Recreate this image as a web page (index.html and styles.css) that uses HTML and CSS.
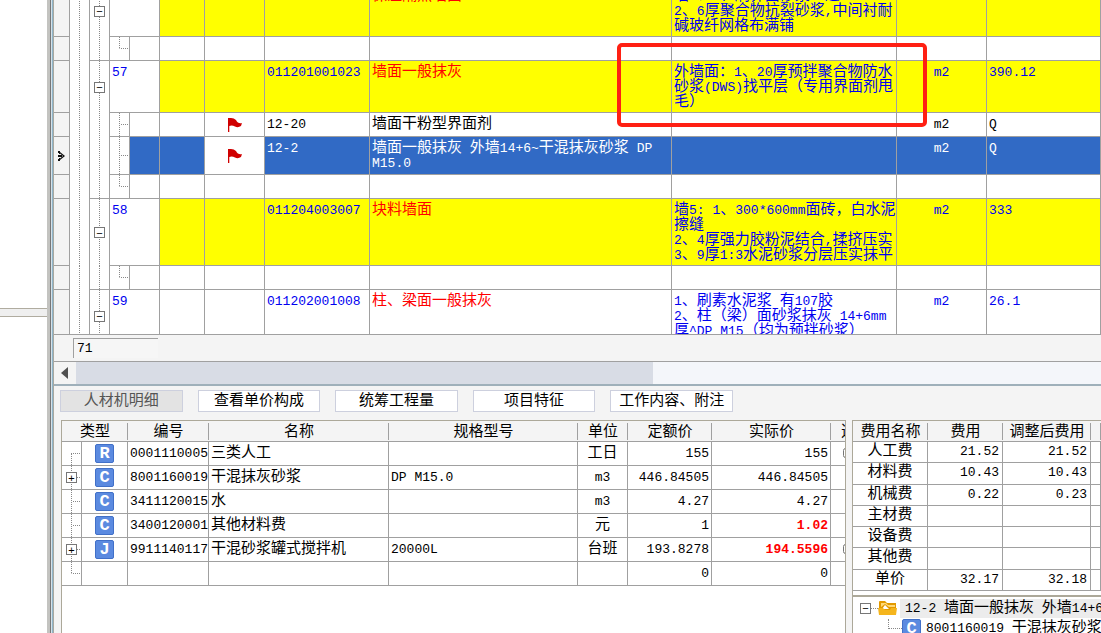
FILE: index.html
```
<!DOCTYPE html>
<html lang="zh-CN">
<head>
<meta charset="utf-8">
<title>工程计价</title>
<link rel="stylesheet" href="styles.css">
</head>
<body>
<div class="app">
  <aside class="side">
    <div class="side-pane side-top"></div>
    <div class="side-pane side-bottom"></div>
  </aside>
  <div class="splitter"></div>
  <main class="main">
    <section class="upper">
      <div class="viewport">
        <table class="grid items">
          <colgroup>
            <col class="w16"><col class="w20"><col class="w20"><col class="w20"><col class="w30"><col class="w45"><col class="w60"><col class="w105"><col class="w302"><col class="w225"><col class="w90"><col>
          </colgroup>
          <tbody>
            <tr class="hl">
              <td class="ind"></td><td class="trunk"></td><td class="node"><button class="box" aria-label="折叠">−</button></td>
              <td class="idx" colspan="2"></td><td></td><td></td><td></td><td class="red">保温隔热墙面</td>
              <td>墙<i>6</i>：<i>1</i>、刷界面砂浆一道<br><i>2</i>、<i>6</i>厚聚合物抗裂砂浆<i>,</i>中间衬耐<br>碱玻纤网格布满铺</td><td></td><td></td>
            </tr>
            <tr class="child">
              <td class="ind"></td><td class="trunk"></td><td class="through last"></td><td class="leaf end"></td><td></td><td></td><td></td><td></td><td></td><td></td><td></td><td></td>
            </tr>
            <tr class="hl">
              <td class="ind"></td><td class="trunk"></td><td class="node"><button class="box" aria-label="折叠">−</button></td>
              <td class="idx" colspan="2"><i>57</i></td><td></td><td></td><td><i>011201001023</i></td><td class="red">墙面一般抹灰</td>
              <td>外墙面：<i>1</i>、<i>20</i>厚预拌聚合物防水<br>砂浆<i>(DWS)</i>找平层（专用界面剂甩<br>毛）</td><td class="c"><i>m2</i></td><td><i>390.12</i></td>
            </tr>
            <tr class="child">
              <td class="ind"></td><td class="trunk"></td><td class="through"></td><td class="leaf"></td><td></td><td></td>
              <td class="flag"><svg width="16" height="16" viewBox="0 0 16 16"><path d="M1 1H4Q7 1 9 3Q11 7 15 6L14 9Q11 11 8 9.500Q5 8 2.300 9V15H1Z" fill="#d00000"/></svg></td>
              <td><i>12-20</i></td><td>墙面干粉型界面剂</td><td></td><td class="c"><i>m2</i></td><td><i>Q</i></td>
            </tr>
            <tr class="child tall sel">
              <td class="ind"><svg width="8" height="12" viewBox="0 0 8 12"><path d="M0 1H2V3H0ZM0 9H2V11H0ZM0 5H4V7H0ZM1 3H2V4H1ZM1 8H2V9H1ZM2 2L7 6L2 10V8.500L5 6L2 3.500Z" fill="#111"/></svg></td><td class="trunk"></td><td class="through"></td><td class="leaf"></td><td></td><td></td>
              <td class="flag"><svg width="16" height="16" viewBox="0 0 16 16"><path d="M1 1H4Q7 1 9 3Q11 7 15 6L14 9Q11 11 8 9.500Q5 8 2.300 9V15H1Z" fill="#d00000"/></svg></td>
              <td><i>12-2</i></td><td>墙面一般抹灰<i> </i>外墙<i>14+6~</i>干混抹灰砂浆<i> DP</i><br><i>M15.0</i></td><td></td><td class="c"><i>m2</i></td><td><i>Q</i></td>
            </tr>
            <tr class="child">
              <td class="ind"></td><td class="trunk"></td><td class="through last"></td><td class="leaf end"></td><td></td><td></td><td></td><td></td><td></td><td></td><td></td><td></td>
            </tr>
            <tr class="hl four">
              <td class="ind"></td><td class="trunk"></td><td class="node"><button class="box" aria-label="折叠">−</button></td>
              <td class="idx" colspan="2"><i>58</i></td><td></td><td></td><td><i>011204003007</i></td><td class="red">块料墙面</td>
              <td>墙<i>5: 1</i>、<i>300*600mm</i>面砖，白水泥<br>擦缝<br><i>2</i>、<i>4</i>厚强力胶粉泥结合<i>,</i>揉挤压实<br><i>3</i>、<i>9</i>厚<i>1:3</i>水泥砂浆分层压实抹平</td><td class="c"><i>m2</i></td><td><i>333</i></td>
            </tr>
            <tr class="child">
              <td class="ind"></td><td class="trunk"></td><td class="through last"></td><td class="leaf end"></td><td></td><td></td><td></td><td></td><td></td><td></td><td></td><td></td>
            </tr>
            <tr class="plain">
              <td class="ind"></td><td class="trunk"></td><td class="node"><button class="box" aria-label="折叠">−</button></td>
              <td class="idx" colspan="2"><i>59</i></td><td></td><td></td><td><i>011202001008</i></td><td class="red">柱、梁面一般抹灰</td>
              <td><i>1</i>、刷素水泥浆<i> </i>有<i>107</i>胶<br><i>2</i>、柱（梁）面砂浆抹灰<i> 14+6mm</i><br>厚<i>^DP M15</i>（均为预拌砂浆）</td><td class="c"><i>m2</i></td><td><i>26.1</i></td>
            </tr>
          </tbody>
        </table>
        <div class="mark"></div>
      </div>
      <div class="summary"><span class="count"><i>71</i></span></div>
      <div class="hscroll"><button class="arrow" aria-label="向左滚动"><svg width="8" height="12" viewBox="0 0 8 12"><path d="M7 0V12L0 6Z" fill="#505050"/></svg></button><div class="thumb"></div><div class="rest"></div></div>
    </section>
    <section class="lower">
      <nav class="tabs">
        <button class="tab on">人材机明细</button><button class="tab">查看单价构成</button><button class="tab">统筹工程量</button><button class="tab">项目特征</button><button class="tab">工作内容、附注</button>
      </nav>
      <div class="panels">
        <div class="panel detail">
          <table class="grid res">
            <colgroup><col class="w20"><col class="w46"><col class="w81"><col class="w180"><col class="w189"><col class="w50"><col class="w84"><col class="w119"><col class="w35"></colgroup>
            <thead><tr><th colspan="2">类型</th><th>编号</th><th>名称</th><th>规格型号</th><th>单位</th><th>定额价</th><th>实际价</th><th>选</th></tr></thead>
            <tbody>
              <tr><td class="leaf start"></td><td class="kind"><b>R</b></td><td><i>0001110005</i></td><td>三类人工</td><td></td><td class="c">工日</td><td class="r"><i>155</i></td><td class="r"><i>155</i></td><td class="c"><input type="checkbox" aria-label="选"></td></tr>
              <tr><td class="leaf"><button class="box" aria-label="展开">+</button></td><td class="kind"><b>C</b></td><td><i>8001160019</i></td><td>干混抹灰砂浆</td><td><i>DP M15.0</i></td><td class="c"><i>m3</i></td><td class="r"><i>446.84505</i></td><td class="r"><i>446.84505</i></td><td></td></tr>
              <tr><td class="leaf"></td><td class="kind"><b>C</b></td><td><i>3411120015</i></td><td>水</td><td></td><td class="c"><i>m3</i></td><td class="r"><i>4.27</i></td><td class="r"><i>4.27</i></td><td></td></tr>
              <tr><td class="leaf"></td><td class="kind"><b>C</b></td><td><i>3400120001</i></td><td>其他材料费</td><td></td><td class="c">元</td><td class="r"><i>1</i></td><td class="r changed"><i>1.02</i></td><td></td></tr>
              <tr><td class="leaf"><button class="box" aria-label="展开">+</button></td><td class="kind"><b>J</b></td><td><i>9911140117</i></td><td>干混砂浆罐式搅拌机</td><td><i>20000L</i></td><td class="c">台班</td><td class="r"><i>193.8278</i></td><td class="r changed"><i>194.5596</i></td><td class="c"><input type="checkbox" aria-label="选"></td></tr>
              <tr><td class="leaf end"></td><td></td><td></td><td></td><td></td><td></td><td class="r"><i>0</i></td><td class="r"><i>0</i></td><td></td></tr>
            </tbody>
          </table>
        </div>
        <div class="cost-col">
          <div class="panel cost">
            <table class="grid fees">
              <colgroup><col class="w75"><col class="w75"><col class="w88"><col></colgroup>
              <thead><tr><th>费用名称</th><th>费用</th><th>调整后费用</th><th></th></tr></thead>
              <tbody>
                <tr><td class="c">人工费</td><td class="r"><i>21.52</i></td><td class="r"><i>21.52</i></td><td></td></tr>
                <tr><td class="c">材料费</td><td class="r"><i>10.43</i></td><td class="r"><i>10.43</i></td><td></td></tr>
                <tr><td class="c">机械费</td><td class="r"><i>0.22</i></td><td class="r"><i>0.23</i></td><td></td></tr>
                <tr><td class="c">主材费</td><td></td><td></td><td></td></tr>
                <tr><td class="c">设备费</td><td></td><td></td><td></td></tr>
                <tr><td class="c">其他费</td><td></td><td></td><td></td></tr>
                <tr><td class="c">单价</td><td class="r"><i>32.17</i></td><td class="r"><i>32.18</i></td><td></td></tr>
              </tbody>
            </table>
          </div>
          <div class="tree">
            <div class="branch"><button class="box" aria-label="折叠">−</button><span class="dots"></span><svg width="20" height="16" viewBox="0 0 20 16"><path d="M1 2Q1 1 2 1H7L9 3H18V14Q18 15 17 15H2Q1 15 1 14Z" fill="#e39a00"/><path d="M3 7L7 4L11 7H17V5H10L8 3H3Z" fill="#ffd978"/><path d="M4 9L7 5L11 9Z" fill="#fff"/><path d="M0 8H5L7 10H12L13 8H19L18 15H1Z" fill="#f5b51c"/></svg><span class="label on"><i>12-2 </i>墙面一般抹灰<i> </i>外墙<i>14+6~</i>干混抹灰砂浆</span></div>
            <div class="branch sub"><span class="elbow"></span><b class="badge">C</b><span class="label"><i>8001160019 </i>干混抹灰砂浆</span></div>
          </div>
        </div>
      </div>
    </section>
  </main>
</div>
</body>
</html>
```
FILE: styles.css
```
* { box-sizing: border-box; }
body { margin: 0; color: #000; background: #f4f4f4; font: 15px/15px "Liberation Mono", "Noto Sans CJK SC", sans-serif; }
button { margin: 0; padding: 0; color: inherit; font: inherit; }
i { font-style: normal; font-size: 13px; white-space: pre; }
.app { display: flex; height: 100vh; overflow: hidden; }

.side { flex: 0 0 47px; display: flex; flex-direction: column; gap: 7px; background: #efefef; }
.side-pane { background: #fff; }
.side-top { flex: 309; border-bottom: 1px solid #b0aca0; }
.side-bottom { flex: 317; border-top: 1px solid #b0aca0; }
.splitter { flex: 0 0 7px; background: linear-gradient(90deg, #c3c3c0 0 3px, #777 3px 4px, #d4e2ea 4px 5px, #8fb4c8 5px 6px, #a8a8a0 6px 7px); }

.main { flex: 1; min-width: 0; display: grid; grid-template-rows: minmax(0, 386fr) minmax(0, 247fr); }
.upper { display: flex; flex-direction: column; min-height: 0; border-bottom: 2px solid #9fb0ba; }
.viewport { flex: 1; min-height: 0; position: relative; overflow: hidden; background: #fff; border-bottom: 1px solid #a0a0a0; }

.grid { width: 100%; table-layout: fixed; border-collapse: separate; border-spacing: 0; }
.grid td { padding: 4px 2px 0; border-right: 1px solid #a0a0a0; border-bottom: 1px solid #a0a0a0; vertical-align: top; white-space: nowrap; overflow: hidden; }
.grid .c { text-align: center; }
.grid .r { text-align: right; }
.w16 { width: 16px; } .w20 { width: 20px; } .w30 { width: 30px; } .w35 { width: 35px; } .w45 { width: 45px; }
.w46 { width: 46px; } .w50 { width: 50px; } .w60 { width: 60px; } .w75 { width: 75px; } .w81 { width: 81px; }
.w84 { width: 84px; } .w88 { width: 88px; } .w90 { width: 90px; } .w105 { width: 105px; } .w119 { width: 119px; }
.w180 { width: 180px; } .w189 { width: 189px; } .w225 { width: 225px; } .w302 { width: 302px; }

.items { margin-top: -15px; }
.items tr { height: 52px; }
.items .child { height: 24px; }
.items .tall { height: 38px; }
.items .four { height: 67px; }
.hl, .plain { color: #0000f0; }
.hl td { background: #ff0; }
.items .red { color: #f00; }
.items .ind { padding: 0; background: #f4f4f4; text-align: center; vertical-align: middle; }
.items .idx { background: #fff; }
.sel td { color: #fff; background: #316ac5; }
.items .flag { padding: 0; background: #fff; text-align: center; vertical-align: middle; }
.flag svg, .ind svg { display: block; margin: auto; }
.items .trunk, .items .through, .items .node { padding: 0; border-bottom: 0; background: repeating-linear-gradient(#888 0 1px, #fff 1px 2px) 9px 0 / 1px 100% no-repeat #fff; vertical-align: middle; }
.items .last { border-bottom: 1px solid #a0a0a0; }
.node .box { margin-left: 4px; }
.box { display: block; width: 11px; height: 11px; border: 1px solid #777; background: #fff; font: 11px/8px "Liberation Sans", sans-serif; color: #000; text-align: center; }

.grid .leaf { --v: 100%; --y: 0; padding: 0 0 0 4px; vertical-align: middle;
  background: repeating-linear-gradient(#888 0 1px, #fff 1px 2px) 9px var(--y) / 1px var(--v) no-repeat,
    repeating-linear-gradient(90deg, #888 0 1px, #fff 1px 2px) 9px 50% / 10px 1px no-repeat #fff; }
.grid .end { --v: 50%; }
.grid .start { --v: 50%; --y: 100%; }

.mark { position: absolute; top: 43px; left: 563px; width: 310px; height: 84px; border: 4px solid #ff2013; border-radius: 5px; }

.summary { flex: 0 0 26px; padding: 3px 19px; border-bottom: 1px solid #a0a0a0; }
.count { display: block; width: 85px; height: 20px; padding: 2px 3px; border-top: 1px solid #a0a0a0; border-left: 1px solid #a0a0a0; background: #f6f6f6; }
.hscroll { flex: 0 0 22px; display: flex; background: #f4f6fa; }
.arrow { flex: 0 0 22px; border: 0; background: #f4f4f4; display: grid; place-items: center; }
.thumb { flex: 577; background: #d8dce5; }
.rest { flex: 448; }

.lower { display: flex; flex-direction: column; min-height: 0; padding: 4px 0 0 7px; }
.tabs { display: flex; gap: 15px; width: 673px; margin: 0 0 8px -1px; }
.tab { flex: 1; height: 22px; border: 1px solid #cdd0de; background: #fff; white-space: nowrap; }
.tab.on { color: #555; background: #e3e3e3; }
.panels { flex: 1; min-height: 0; display: grid; grid-template-columns: minmax(0, 785fr) minmax(0, 249fr); gap: 6px; }
.panel { background: #fff; border: 1px solid #aca899; overflow: hidden; }
.detail { border-bottom: 0; }
.grid th { height: 21px; padding: 2px 0 0; border-bottom: 1px solid #a0a0a0; font-weight: 400; white-space: nowrap; overflow: hidden;
  background: linear-gradient(#a0a0a0, #a0a0a0) right 2px / 1px 17px no-repeat #f4f4f4; }
.res { width: 804px; }
.res tbody tr { height: 24px; }
.res .kind { padding: 0; vertical-align: middle; }
.kind b { margin: auto; }
.kind b, .badge { display: block; width: 19px; height: 19px; border: 1px solid #4170c8; border-radius: 2px; background: #5b8ae0; color: #fff; font: 700 17px/17px "Liberation Mono", monospace; text-align: center; }
.res input { width: 10px; height: 10px; margin: 2px 0; }
.res .changed { color: #f00; font-weight: 700; }
.cost-col { display: flex; flex-direction: column; min-height: 0; }
.cost { flex: 0 0 auto; padding-bottom: 4px; border-right: 0; border-bottom: 2px solid #aca899; }
.fees { height: 170px; }
.fees td { padding: 2px 3px 0; }
.tree { flex: 1; min-height: 0; overflow: hidden; padding: 1px 0 0 7px; background: #fff; border-left: 1px solid #aca899; }
.branch { display: flex; align-items: center; height: 20px; white-space: nowrap; }
.branch .box { flex: none; }
.branch svg, .badge { flex: none; }
.dots { flex: 0 0 7px; height: 1px; background: repeating-linear-gradient(90deg, #888 0 1px, #fff 1px 2px); }
.label { padding: 2px 5px; }
.label.on { flex: 1; background: #ececec; margin-left: 2px; }
.sub { padding-left: 28px; }
.elbow { flex: 0 0 14px; height: 10px; margin-bottom: 8px; border-left: 1px dotted #888; border-bottom: 1px dotted #888; }
```
